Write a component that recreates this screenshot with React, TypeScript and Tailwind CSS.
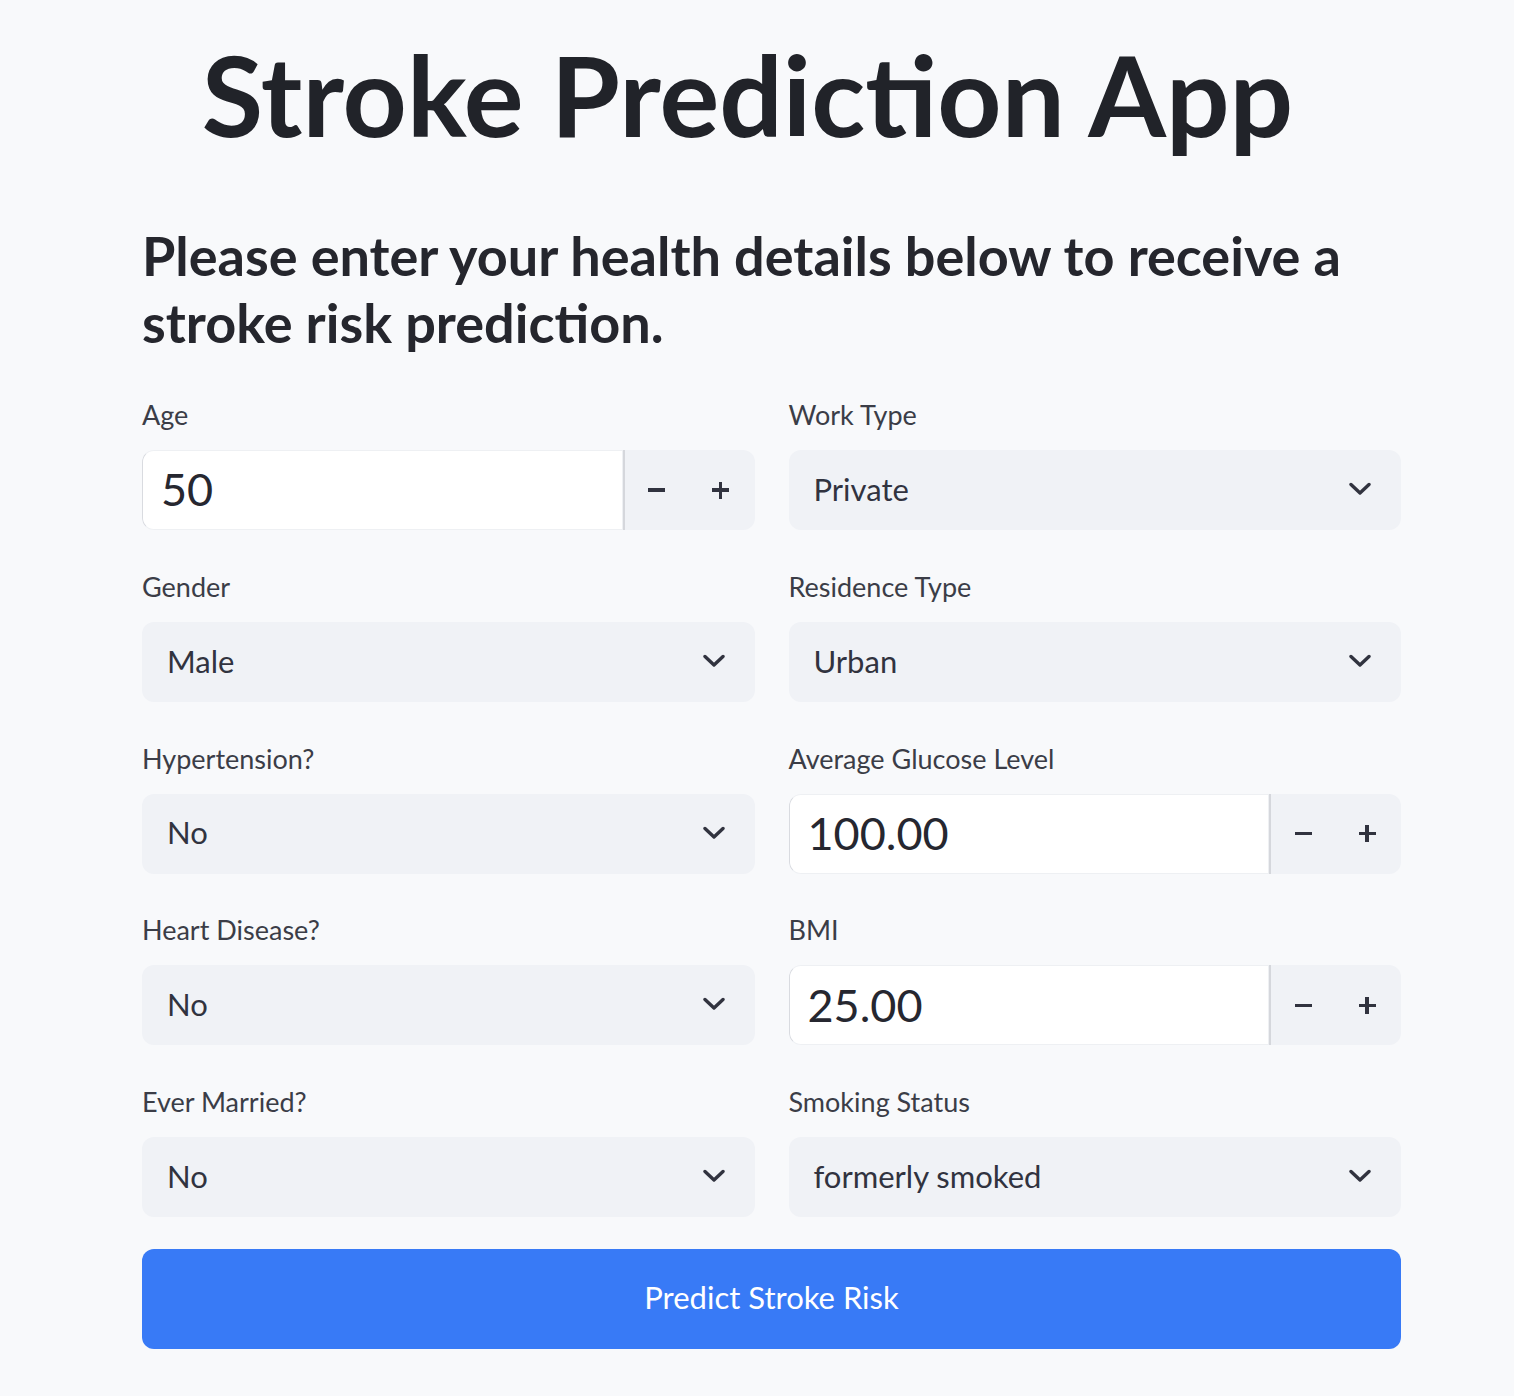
import React from "react";

const font = { fontFamily: "Lato, 'Noto Sans', sans-serif" };

function Chevron() {
  return (
    <svg width="22" height="14" viewBox="0 0 22 14" fill="none">
      <path d="M2 2.5 L11 11 L20 2.5" stroke="#31333f" strokeWidth="3.4" strokeLinecap="round" strokeLinejoin="round" />
    </svg>
  );
}

function Label({ text }: { text: string }) {
  return <div className="h-[36px] mb-[19px] pt-[2px] text-[27px] leading-[36px] text-[#3b3d47]">{text}</div>;
}

function SelectField({ label, value }: { label: string; value: string }) {
  return (
    <div>
      <Label text={label} />
      <div className="h-[80px] rounded-[12px] bg-[#f0f2f6] flex items-center justify-between pl-[25px] pr-[30px] pb-[2px]">
        <span className="text-[31px] text-[#31333f]">{value}</span>
        <Chevron />
      </div>
    </div>
  );
}

function NumberField({ label, value }: { label: string; value: string }) {
  return (
    <div>
      <Label text={label} />
      <div className="h-[80px] rounded-[12px] bg-[#f0f2f6] flex overflow-hidden">
        <div className="flex-1 bg-white rounded-l-[12px] border border-[#eef0f3] border-l-[#d9dbe0] flex items-center pl-[18px]">
          <span className="text-[45px] text-[#262730]">{value}</span>
        </div>
        <div className="w-[2px] bg-[#d5d7dc]" />
        <div className="w-[130px] flex">
          <div className="w-[64px] flex items-center justify-center">
            <div className="w-[17px] h-[3.5px] bg-[#31333f]" />
          </div>
          <div className="w-[64px] flex items-center justify-center relative">
            <div className="w-[17px] h-[3.5px] bg-[#31333f]" />
            <div className="absolute w-[3.5px] h-[17px] bg-[#31333f]" />
          </div>
        </div>
      </div>
    </div>
  );
}

export default function App() {
  return (
    <div className="min-h-[1396px] w-full bg-[#f8f9fb]" style={font}>
      <div className="pl-[142px] w-[1401px]">
        <h1 className="pt-[38px] h-[150px] text-center pr-[48px] text-[112px] leading-[112px] font-bold text-[#212329]">
          Stroke Prediction App
        </h1>
        <h3 className="mt-[72px] text-[54px] leading-[67px] font-bold text-[#25262d]">
          Please enter your health details below to receive a stroke risk prediction.
        </h3>
        <div className="mt-[39px] grid grid-cols-2 gap-x-[34px] gap-y-[36.75px]">
          <NumberField label="Age" value="50" />
          <SelectField label="Work Type" value="Private" />
          <SelectField label="Gender" value="Male" />
          <SelectField label="Residence Type" value="Urban" />
          <SelectField label="Hypertension?" value="No" />
          <NumberField label="Average Glucose Level" value="100.00" />
          <SelectField label="Heart Disease?" value="No" />
          <NumberField label="BMI" value="25.00" />
          <SelectField label="Ever Married?" value="No" />
          <SelectField label="Smoking Status" value="formerly smoked" />
        </div>
        <button className="mt-[32px] w-full h-[100px] rounded-[12px] bg-[#387af6] text-white text-[31px] flex items-center justify-center pb-[3px]">
          Predict Stroke Risk
        </button>
      </div>
    </div>
  );
}
